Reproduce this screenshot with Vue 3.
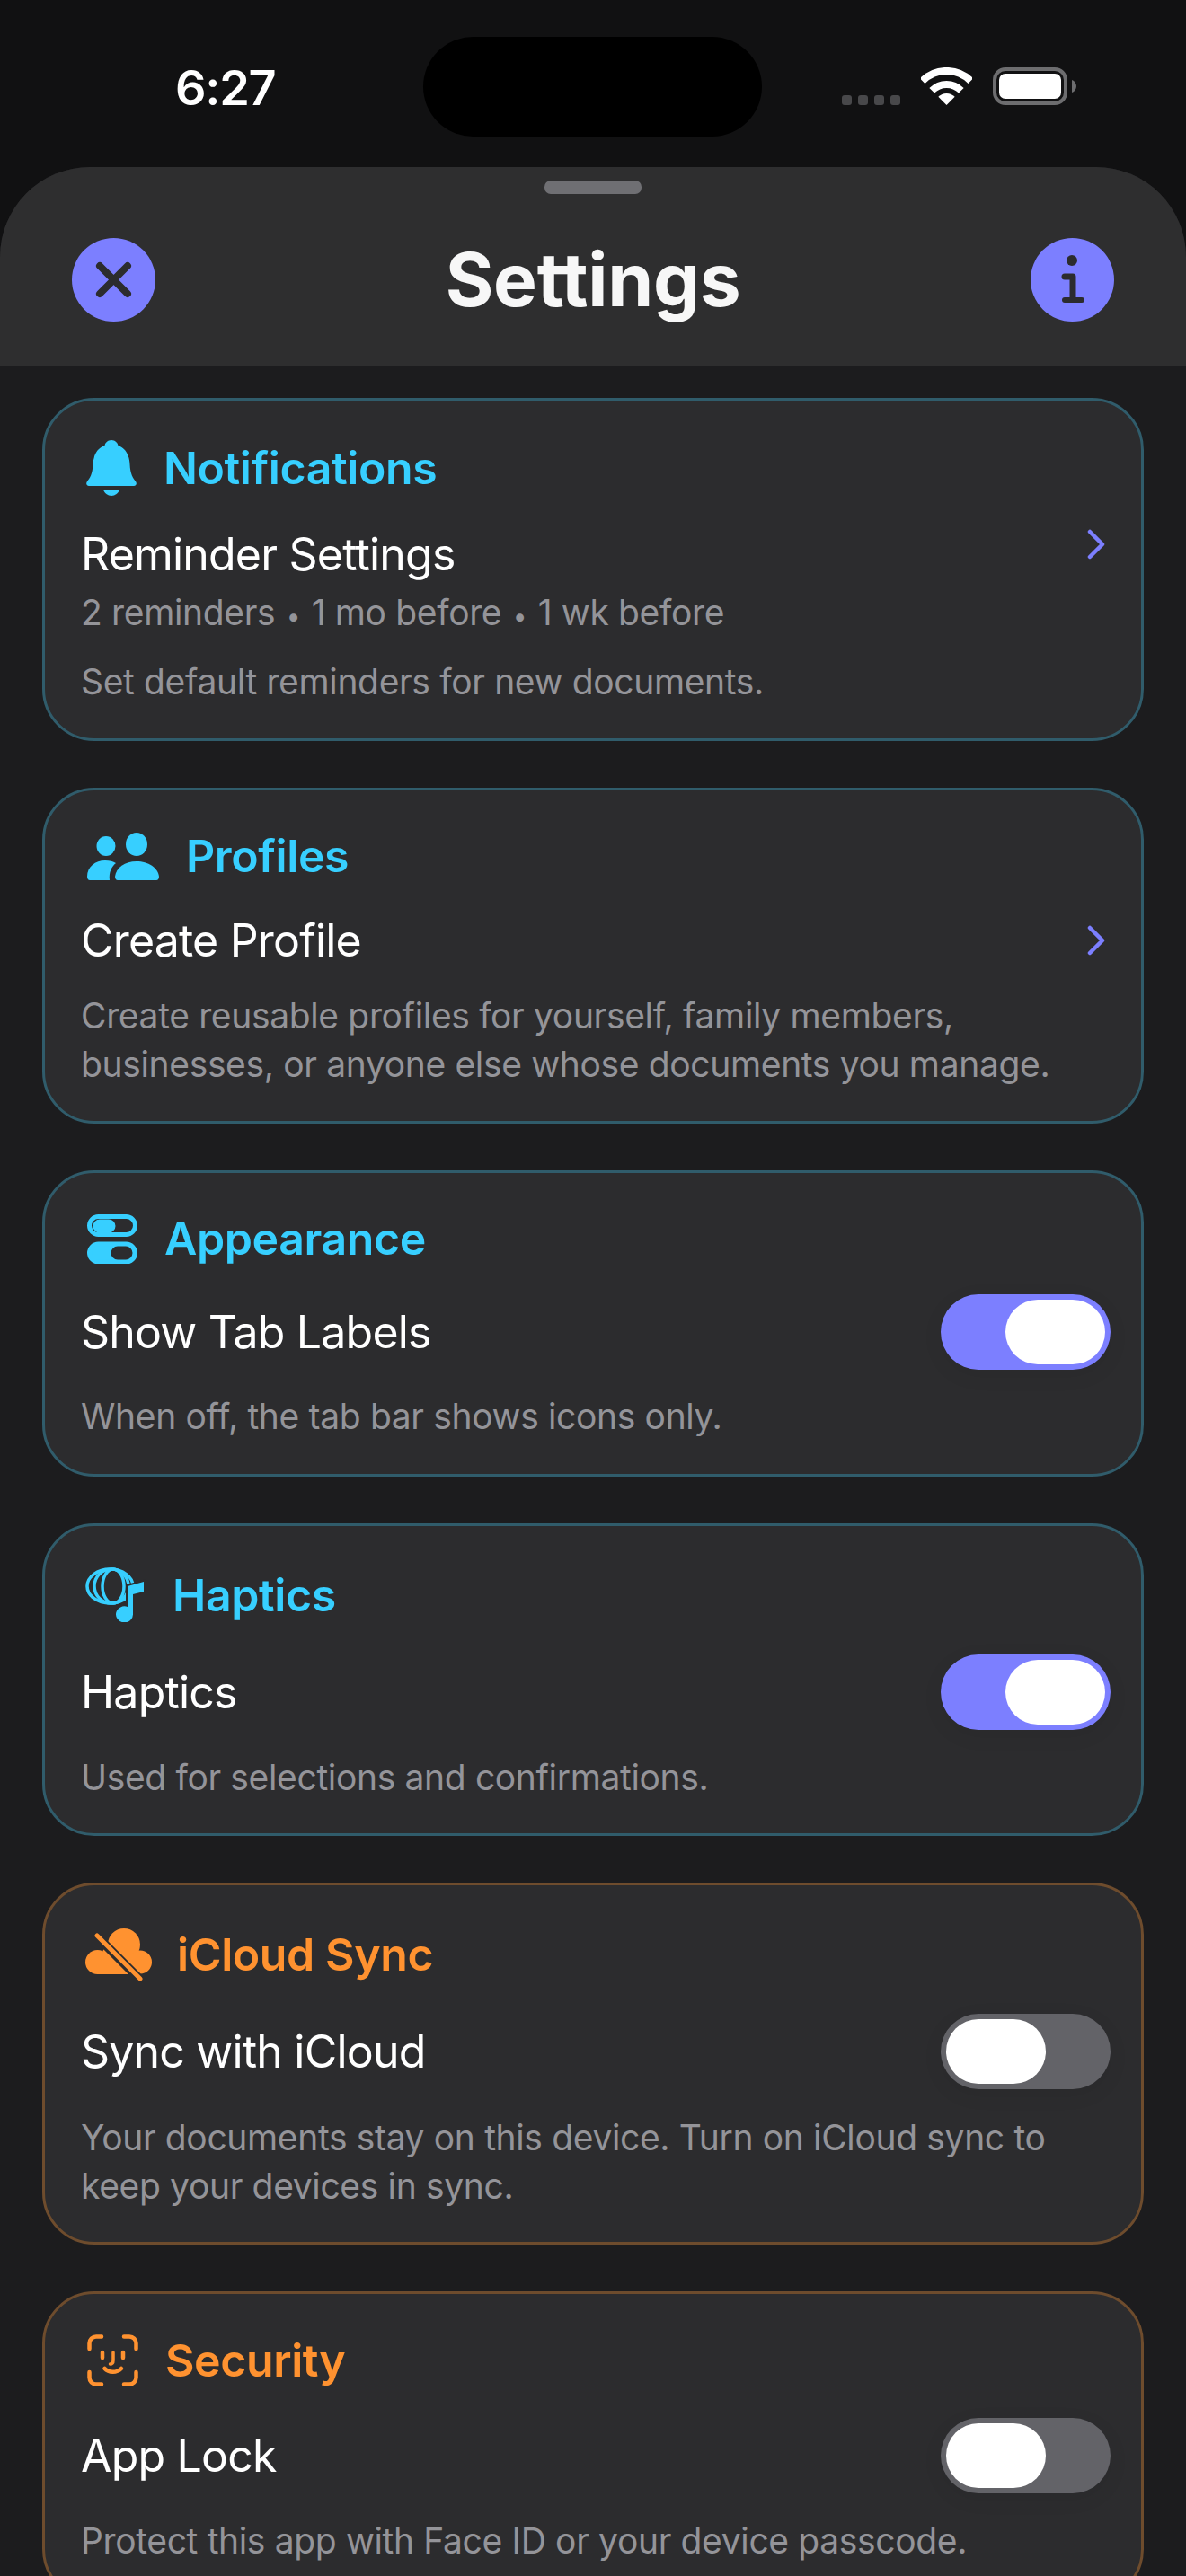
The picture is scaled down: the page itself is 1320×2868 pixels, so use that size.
<script setup>
const cards = [
  { id: "c1", tone: "blue", icon: "bell", title: "Notifications", label: "Reminder Settings", sub: ["2 reminders", "1 mo before", "1 wk before"], desc: ["Set default reminders for new documents."], control: "chevron" },
  { id: "c2", tone: "blue", icon: "people", title: "Profiles", label: "Create Profile", desc: ["Create reusable profiles for yourself, family members,", "businesses, or anyone else whose documents you manage."], control: "chevron" },
  { id: "c3", tone: "blue", icon: "switches", title: "Appearance", label: "Show Tab Labels", desc: ["When off, the tab bar shows icons only."], control: "on" },
  { id: "c4", tone: "blue", icon: "haptics", title: "Haptics", label: "Haptics", desc: ["Used for selections and confirmations."], control: "on" },
  { id: "c5", tone: "orange", icon: "cloud", title: "iCloud Sync", label: "Sync with iCloud", desc: ["Your documents stay on this device. Turn on iCloud sync to", "keep your devices in sync."], control: "off" },
  { id: "c6", tone: "orange", icon: "face", title: "Security", label: "App Lock", desc: ["Protect this app with Face ID or your device passcode."], control: "off" }
]
</script>

<template>
  <div class="page">
    <div class="status">
      <span class="time">6:27</span>
      <div class="island"></div>
      <div class="signal"><i></i><i></i><i></i><i></i></div>
      <svg class="wifi" width="57" height="42" viewBox="0 0 57 42">
        <path d="M1.6 15.1A38 38 0 0 1 55.4 15.1" fill="none" stroke="#fff" stroke-width="8" />
        <path d="M12.2 25.7A23 23 0 0 1 44.8 25.7" fill="none" stroke="#fff" stroke-width="8" />
        <path d="M28.5 42L19.3 32.8A13 13 0 0 1 37.7 32.8Z" fill="#fff" />
      </svg>
      <svg class="battery" width="93" height="42" viewBox="0 0 93 42">
        <rect x="2" y="2" width="79" height="38" rx="12" fill="none" stroke="#6d6d6f" stroke-width="4" />
        <rect x="7" y="7" width="69" height="28" rx="7" fill="#fff" />
        <path d="M88 14c3 1 5 4 5 7s-2 6-5 7z" fill="#6d6d6f" />
      </svg>
    </div>

    <div class="sheet">
      <header class="header">
        <div class="grabber"></div>
        <div class="nav">
          <button class="round">
            <svg width="93" height="93" viewBox="0 0 93 93">
              <path d="M31 31L62 62M62 31L31 62" fill="none" stroke="#2c2c2e" stroke-width="8" stroke-linecap="round" />
            </svg>
          </button>
          <h1>Settings</h1>
          <button class="round">
            <svg width="93" height="93" viewBox="0 0 93 93">
              <circle cx="46" cy="25" r="6" fill="#2c2c2e" />
              <path d="M38 43H47V68" fill="none" stroke="#2c2c2e" stroke-width="7" stroke-linecap="round" stroke-linejoin="round" />
              <path d="M38 69H57" fill="none" stroke="#2c2c2e" stroke-width="6" stroke-linecap="round" />
            </svg>
          </button>
        </div>
      </header>

      <div class="list">
        <section v-for="card in cards" :key="card.id" class="card" :class="[card.id, card.tone]">
          <div class="head">
            <svg v-if="card.icon === 'bell'" width="56" height="62" viewBox="0 0 56 62">
              <path d="M28 0c4 0 7 3 7.500 6C44 9 48 17 48.500 27 49 38 52 42 55 46c1.500 2 1 5-2 5H3c-3 0-3.500-3-2-5C4 42 7 38 7.500 27 8 17 12 9 20.500 6 21 3 24 0 28 0z" fill="currentColor" />
              <path d="M19 55H37c-1 4-5 7-9 7s-8-3-9-7z" fill="currentColor" />
            </svg>
            <svg v-if="card.icon === 'people'" width="80" height="53" viewBox="0 0 80 53">
              <ellipse cx="21" cy="15" rx="10.500" ry="11" fill="currentColor" />
              <ellipse cx="55" cy="13" rx="12" ry="13" fill="currentColor" />
              <path d="M0 49C0 38 9 31 20 31c5 0 9 1 12 3C27 38 24 44 25 53H3c-2 0-3-2-3-4z" fill="currentColor" />
              <path d="M31 49C32 39 42 32 55 32s24 7 25 17c0 2-1 4-3 4H34c-2 0-3-2-3-4z" fill="currentColor" />
            </svg>
            <svg v-if="card.icon === 'switches'" width="56" height="55" viewBox="0 0 56 55">
              <rect x="2.500" y="2.500" width="51" height="20" rx="10" fill="none" stroke="currentColor" stroke-width="5" />
              <rect x="8" y="7" width="22" height="12" rx="6" fill="currentColor" stroke="currentColor" stroke-width="3" />
              <rect x="2.500" y="33" width="51" height="20" rx="10" fill="currentColor" stroke="currentColor" stroke-width="5" />
              <rect x="28" y="37" width="21" height="12" rx="6" fill="#2c2c2e" stroke="#2c2c2e" stroke-width="3" />
            </svg>
            <svg v-if="card.icon === 'haptics'" width="67" height="61" viewBox="0 0 67 61">
              <ellipse cx="27.500" cy="21" rx="25.500" ry="19" fill="none" stroke="currentColor" stroke-width="3.500" />
              <ellipse cx="29" cy="21" rx="19" ry="19" fill="none" stroke="currentColor" stroke-width="3.500" />
              <ellipse cx="31" cy="21" rx="12" ry="19" fill="none" stroke="currentColor" stroke-width="3.500" />
              <path d="M47 21L65 16V27L53 30V52A9.500 9 0 1 1 47 44z" fill="currentColor" stroke="#2c2c2e" stroke-width="4" paint-order="stroke" />
            </svg>
            <svg v-if="card.icon === 'cloud'" width="74" height="59" viewBox="0 0 74 59">
              <g fill="currentColor">
                <circle cx="13.500" cy="37.500" r="13.500" />
                <circle cx="27" cy="28" r="8" />
                <circle cx="43" cy="18" r="18" />
                <circle cx="61" cy="37.500" r="13" />
                <rect x="13" y="30" width="48" height="21" />
              </g>
              <path d="M10 6L63 59" stroke="#2c2c2e" stroke-width="10" />
              <path d="M13 8L61 56" stroke="currentColor" stroke-width="5" stroke-linecap="round" />
            </svg>
            <svg v-if="card.icon === 'face'" width="57" height="58" viewBox="0 0 57 58">
              <g fill="none" stroke="currentColor" stroke-width="4.500" stroke-linecap="round">
                <path d="M2.500 16V10A7.500 7.500 0 0 1 10 2.500H16" />
                <path d="M41 2.500H47A7.500 7.500 0 0 1 54.500 10V16" />
                <path d="M2.500 42V48A7.500 7.500 0 0 0 10 55.500H16" />
                <path d="M41 55.500H47A7.500 7.500 0 0 0 54.500 48V42" />
                <path d="M17 20V26M40 20V26" />
                <path d="M29 20V29C29 32 27.500 33 25.500 33" stroke-width="3.500" />
                <path d="M19.500 38C24 43 33 43 38 38" />
              </g>
            </svg>
            <h2>{{ card.title }}</h2>
          </div>

          <div class="row">
            <span class="label">{{ card.label }}</span>
            <svg v-if="card.control === 'chevron'" class="chevron" width="20" height="34" viewBox="0 0 20 34">
              <path d="M3 3L17 17L3 31" fill="none" stroke="#7c7fff" stroke-width="4.500" stroke-linecap="round" stroke-linejoin="round" />
            </svg>
            <div v-else class="toggle" :class="card.control"><div class="thumb"></div></div>
          </div>

          <p v-if="card.sub" class="sub">
            <template v-for="(part, i) in card.sub" :key="part">
              <span v-if="i > 0" class="dot"> • </span>{{ part }}
            </template>
          </p>
          <p class="desc"><span v-for="line in card.desc" :key="line">{{ line }}</span></p>
        </section>
      </div>
    </div>
  </div>
</template>

<style scoped>
.page {
  width: 1320px;
  height: 2868px;
  overflow: hidden;
  background: #111112;
  font-family: Inter, "Liberation Sans", sans-serif;
  color: #fff;
}

.status {
  height: 186px;
  display: flex;
  align-items: flex-start;
}
.time {
  width: 276px;
  margin: 62px 0 0 195px;
  font-size: 54px;
  line-height: 72px;
  font-weight: 600;
  letter-spacing: -1.3px;
}
.island {
  width: 377px;
  height: 111px;
  margin-top: 41px;
  border-radius: 56px;
  background: #000;
}
.signal {
  display: flex;
  gap: 7px;
  margin: 106px 0 0 89px;
}
.signal i {
  width: 11px;
  height: 11px;
  border-radius: 3px;
  background: #48484a;
}
.wifi { margin: 75px 0 0 23px; }
.battery { margin: 75px 0 0 23px; }

.sheet {
  background: #1c1c1e;
  border-radius: 100px 100px 0 0;
  overflow: hidden;
}
.header {
  height: 222px;
  padding-top: 15px;
  box-sizing: border-box;
  background: #2e2e2f;
}
.grabber {
  width: 108px;
  height: 15px;
  margin: 0 auto;
  border-radius: 7px;
  background: #6f6f73;
}
.nav {
  display: flex;
  justify-content: space-between;
  align-items: center;
  height: 93px;
  margin-top: 49px;
  padding: 0 80px;
}
.nav h1 {
  margin: 0;
  font-size: 82px;
  line-height: 93px;
  font-weight: 700;
  letter-spacing: -0.25px;
  color: #f7f7f7;
}
.round {
  width: 93px;
  height: 93px;
  padding: 0;
  border: none;
  border-radius: 50%;
  background: #7c7fff;
}
.round svg { display: block; }

.list {
  display: flex;
  flex-direction: column;
  gap: 52px;
  padding: 35px 47px 0;
}
.card {
  border: 3px solid;
  border-radius: 58px;
  background: #2c2c2e;
  padding: 43px 34px 37px 40px;
}
.card.blue { border-color: #305c6b; color: #37cfff; }
.card.orange { border-color: #6e4c2d; color: #ff9230; }

.head {
  display: flex;
  align-items: center;
  gap: 30px;
  min-height: 60px;
}
.head svg { margin-left: 7px; flex: none; }
.head h2 {
  margin: 0;
  font-size: 50px;
  line-height: 60px;
  font-weight: 600;
  letter-spacing: -0.4px;
}

.row {
  display: flex;
  justify-content: space-between;
  align-items: center;
  min-height: 62px;
  margin-top: 32px;
}
.label {
  font-size: 50px;
  line-height: 62px;
  font-weight: 400;
  letter-spacing: -0.8px;
  color: #fff;
}
.chevron { margin-right: 6px; }

.sub,
.desc {
  margin: 0;
  font-size: 39px;
  line-height: 54px;
  letter-spacing: -0.35px;
  color: #949499;
}
.sub { margin-top: 7px; white-space: pre-wrap; }
.dot { font-size: 28px; line-height: 1; margin: 0 5px; }
.desc { margin-top: 25px; }
.desc span { display: block; white-space: nowrap; }

.toggle {
  display: flex;
  width: 189px;
  height: 84px;
  padding: 6px;
  box-sizing: border-box;
  border-radius: 42px;
  box-shadow: 0 6px 24px rgba(0, 0, 0, 0.06);
}
.toggle.on { justify-content: flex-end; background: #7c7fff; }
.toggle.off { background: #636368; }
.thumb {
  width: 111px;
  height: 72px;
  border-radius: 36px;
  background: #fff;
}

.c1 { padding-top: 44px; padding-bottom: 36px; }
.c1 .head svg { margin-left: 6px; }
.c1 .row { margin-top: 34px; }
.c1 .desc { margin-top: 23px; }
.c1 .chevron { margin-bottom: 22px; }
.c2 { padding-bottom: 36px; }
.c2 .row { margin-top: 33px; }
.c2 .desc { margin-top: 26px; }
.c3 { padding-top: 43px; padding-bottom: 37px; }
.c4 { padding-top: 46px; padding-bottom: 35px; }
.c4 .head svg { margin-left: 5px; }
.c4 .row { margin-top: 36px; }
.c4 .desc { margin-top: 26px; }
.c5 { padding-top: 47px; padding-bottom: 35px; }
.c5 .head { gap: 28px; }
.c5 .head svg { margin-left: 5px; }
.c5 .row { margin-top: 36px; }
.c5 .desc { margin-top: 27px; }
.c6 { padding-top: 44px; }
.c6 .row { margin-top: 34px; }
.c6 .desc { margin-top: 26px; }
</style>

<style>
body { background: #1c1c1e; }
</style>
